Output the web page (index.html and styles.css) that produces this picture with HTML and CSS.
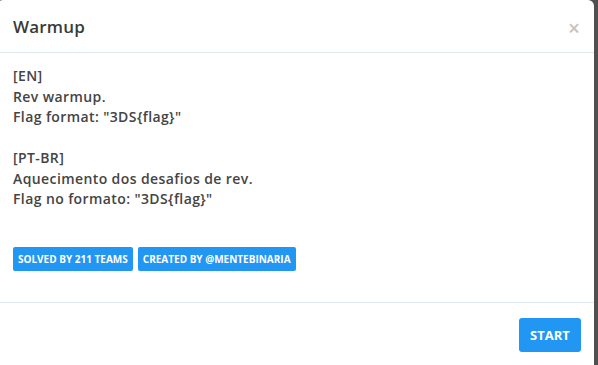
FILE: index.html
```html
<!DOCTYPE html>
<html lang="en">
  <head>
    <meta charset="UTF-8" />
    <meta name="viewport" content="width=device-width, initial-scale=1.0" />
    <title>Warmup</title>
    <link rel="stylesheet" href="styles.css">
  </head>
  <body>
    <div class="modal">
      <div class="modal-header">
        <h4 class="modal-title">Warmup</h4>
        <button class="close" type="button">&times;</button>
      </div>

      <div class="modal-body">
        <p class="description">
          [EN]<br>
          Rev warmup.<br>
          Flag format: "3DS{flag}"<br>
          <br>
          [PT-BR]<br>
          Aquecimento dos desafios de rev.<br>
          Flag no formato: "3DS{flag}"
        </p>
        <div class="badges">
          <span class="badge">Solved by 211 teams</span>
          <span class="badge">Created by @mentebinaria</span>
        </div>
      </div>

      <div class="modal-footer">
        <button class="btn-start" type="button">Start</button>
      </div>
    </div>
  </body>
</html>
```

FILE: styles.css
```css
body {
  margin: 0;
  padding: 0;
  background-color: #505050;
  font-family: "Open Sans", Arial, sans-serif;
  overflow: hidden;
}

.modal {
  width: 597px;
  height: 400px;
  margin-left: -3px;
  background-color: #fff;
  border-radius: 6px 6px 0 0;
}

.modal-header {
  display: flex;
  align-items: center;
  justify-content: space-between;
  height: 53px;
  padding: 0 14px 0 16px;
  box-sizing: border-box;
  border-bottom: 1px solid #dfe7ef;
}

.modal-title {
  margin: 0;
  font-size: 17px;
  font-weight: 600;
  letter-spacing: 0.2px;
  color: #3a3a3a;
}

.close {
  border: none;
  background: none;
  padding: 0;
  margin-top: 4px;
  font-family: "Open Sans", Arial, sans-serif;
  font-size: 21px;
  font-weight: 600;
  color: #c4c4c4;
  cursor: pointer;
}

.modal-body {
  padding: 13px 17px 31px 16px;
}

.description {
  margin: 0;
  font-size: 14px;
  line-height: 20.5px;
  font-weight: 600;
  letter-spacing: 0.4px;
  color: #444;
}

.badges {
  display: flex;
  gap: 5px;
  margin-top: 37px;
}

.badge {
  display: inline-block;
  padding: 0 5px;
  height: 24px;
  line-height: 24px;
  border-radius: 2px;
  background-color: #2196f3;
  color: #fff;
  font-size: 10px;
  font-weight: 700;
  text-transform: uppercase;
}

.modal-footer {
  display: flex;
  justify-content: flex-end;
  padding: 15px 13px;
  border-top: 1px solid #dfe7ef;
}

.btn-start {
  width: 62px;
  height: 34px;
  border: none;
  border-radius: 3px;
  background-color: #2196f3;
  color: #fff;
  font-family: "Open Sans", Arial, sans-serif;
  font-size: 13px;
  font-weight: 700;
  text-transform: uppercase;
  cursor: pointer;
}
```
